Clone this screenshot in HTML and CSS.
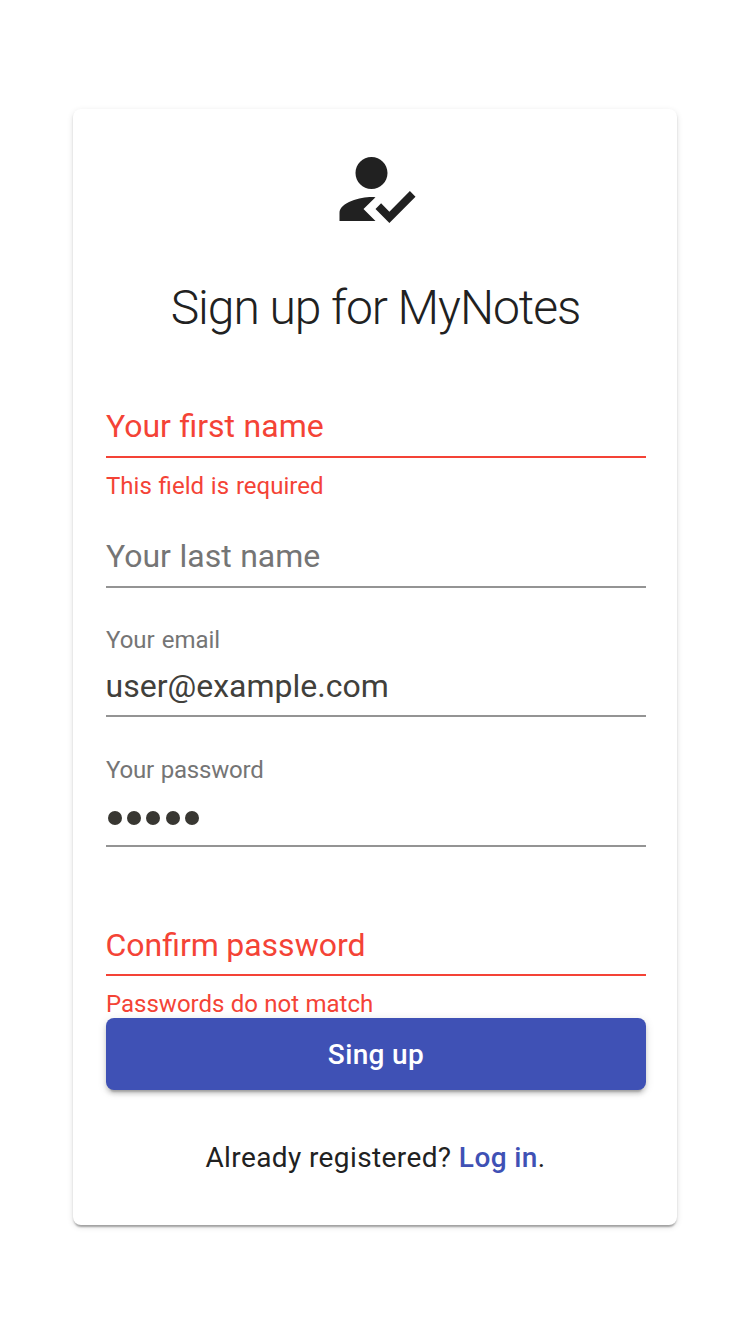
FILE: index.html
```html
<!DOCTYPE html>
<html lang="en">
<head>
<meta charset="utf-8">
<title>MyNotes</title>
<link rel="stylesheet" href="styles.css">
</head>
<body>
<main class="card">
  <svg class="logo" viewBox="0 0 24 24" fill="currentColor"><path d="M9 17l3-2.94c-.39-.04-.68-.06-1-.06-2.67 0-8 1.34-8 4v2h9l-3-3zm2-5c2.210 0 4-1.790 4-4s-1.790-4-4-4-4 1.790-4 4 1.790 4 4 4"/><path d="M15.470 20.500L12 17l1.400-1.410 2.070 2.080 5.130-5.170 1.400 1.410z"/></svg>
  <h1 class="title">Sign up for MyNotes</h1>
  <form class="form">
    <div class="field error"><div class="label"></div><div class="value">Your first name</div><div class="hint required">This field is required</div></div>
    <div class="field"><div class="label"></div><div class="value placeholder">Your last name</div><div class="hint"></div></div>
    <div class="field"><div class="label">Your email</div><div class="value email">user@example.com</div><div class="hint"></div></div>
    <div class="field"><div class="label password">Your password</div><div class="value dots"><i></i><i></i><i></i><i></i><i></i></div><div class="hint"></div></div>
    <div class="field error confirm"><div class="label"></div><div class="value">Confirm password</div><div class="hint">Passwords do not match</div></div>
    <button class="submit" type="button">Sing up</button>
  </form>
  <p class="footer">Already registered? <a class="link">Log in</a>.</p>
</main>
</body>
</html>
```
FILE: styles.css
```css
body { margin: 0; box-sizing: border-box; min-height: 1334px; padding: 109px 73px; background: #fff; font-family: Roboto, sans-serif; color: #212121; }
.card { box-sizing: border-box; width: 604px; height: 1116px; padding: 32px 31px 0 33px; border-radius: 8px; background: #fff; display: flex; flex-direction: column; align-items: center; box-shadow: 0 4px 2px -2px rgba(0,0,0,.2), 0 2px 2px rgba(0,0,0,.14), 0 2px 6px rgba(0,0,0,.12); }
.logo { width: 97px; height: 96px; margin-right: 2px; }
.title { margin: 39px 1px 0 0; font-size: 48px; line-height: 64px; font-weight: 300; letter-spacing: -1.030px; white-space: nowrap; }
.form { width: 540px; padding-top: 29px; }
.field { height: 129.600px; color: #757575; white-space: nowrap; }
.label { height: 33px; font-size: 24px; line-height: 24px; word-spacing: 1px; }
.label.password { letter-spacing: -.2px; }
.value { box-sizing: border-box; height: 56px; padding-top: 5px; border-bottom: 2px solid #949494; font-size: 32px; line-height: 38px; word-spacing: .6px; }
.hint { font-size: 24px; line-height: 28px; padding-top: 14px; word-spacing: .4px; }
.required { word-spacing: .9px; }
.error, .error .value { color: #f44336; border-color: #f44336; }
.email { color: #41403b; padding-top: 6px; text-indent: -.5px; }
.dots { display: flex; align-items: center; gap: 5.200px; padding: 1px 0 0 2px; }
.dots i { width: 14px; height: 14px; border-radius: 50%; background: #383732; }
.confirm { height: 130.600px; }
.confirm .value { padding-top: 6px; word-spacing: -.6px; text-indent: -.5px; }
.submit { display: block; width: 540px; height: 72px; padding: 2px 0 0; border: 0; border-radius: 8px; background: #3f51b5; color: #fff; font: 500 28px Roboto, sans-serif; letter-spacing: .35px; box-shadow: 0 6px 2px -4px rgba(0,0,0,.2), 0 4px 4px rgba(0,0,0,.14), 0 2px 10px rgba(0,0,0,.12); }
.footer { margin: 48px 1px 0 0; font-size: 28px; line-height: 40px; letter-spacing: .4px; }
.link { color: #3f51b5; font-weight: 500; }
```
